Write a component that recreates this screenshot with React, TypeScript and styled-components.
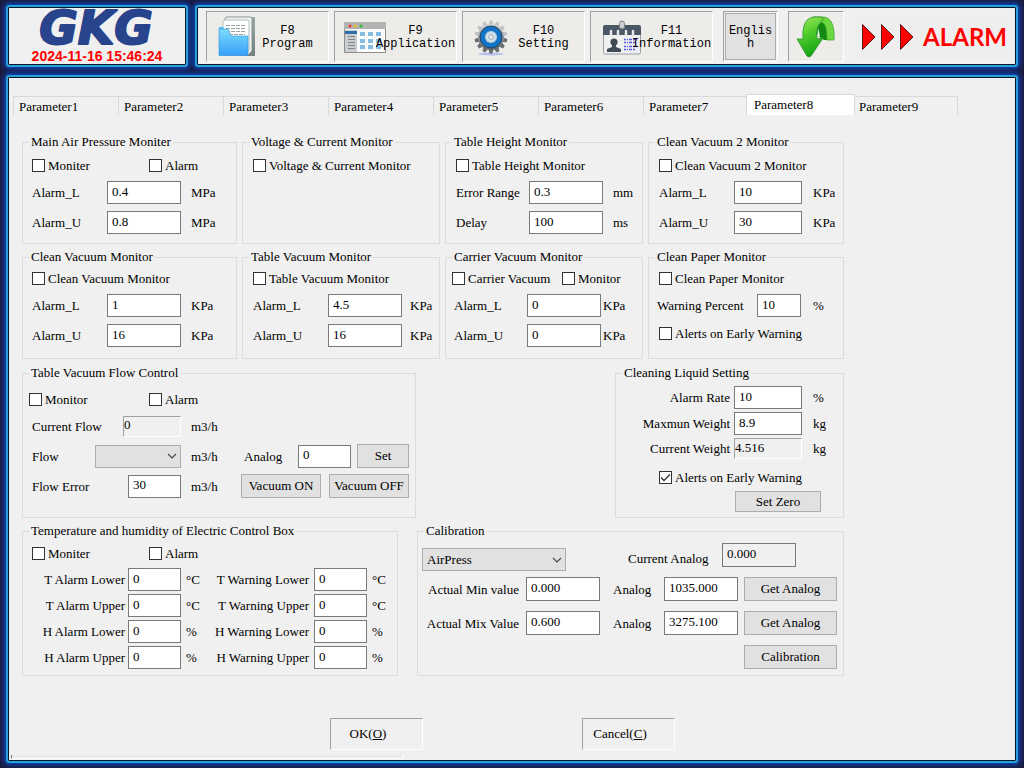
import React, { useId, useState } from "react";
import styled, { createGlobalStyle, css } from "styled-components";

const GlobalStyle = createGlobalStyle`
  *, *::before, *::after { box-sizing: border-box; }
  body {
    margin: 0;
    background: #1b1b42;
    color: #000;
    font: 13px/16px "Liberation Serif", "Times New Roman", serif;
  }
  button, input, select { font: inherit; color: inherit; margin: 0; border-radius: 0; }
`;

/* ---------- frame ---------- */

const Page = styled.div`
  min-height: 100vh;
  padding: 5px 6px;
  display: flex;
  flex-direction: column;
  gap: 8px;
  background: #1b1b42;
`;

const panel = css`
  border: 2px solid #2a9fd8;
  border-radius: 3px;
  background: #f0f0f0;
  box-shadow: inset 0 0 0 1px #06182c, 0 0 4px 2px #0a48b8;
`;

const Header = styled.header`
  display: grid;
  grid-template-columns: 182px 1fr;
  gap: 7px;
`;

const Brand = styled.div`
  ${panel}
  height: 62px;
  display: flex;
  flex-direction: column;
  align-items: center;
`;

const LogoArt = styled.svg`
  display: block;
  width: 176px;
  height: 41px;
  overflow: visible;
`;

const Clock = styled.time`
  font: bold 14px/16px "Liberation Sans", Arial, sans-serif;
  color: #f00;
`;

const Toolbar = styled.nav`
  ${panel}
  display: flex;
  align-items: center;
  gap: 10px;
  padding: 1px 8px 0 9px;
`;

const ToolGroup = styled.div`
  display: flex;
  gap: 5px;
`;

const sunken = css`
  border: 1px solid;
  border-color: #a0a0a0 #fff #fff #a0a0a0;
`;

const ToolButton = styled.button`
  ${sunken}
  width: 123px;
  height: 51px;
  padding: 0;
  display: grid;
  grid-template-columns: 40px 14px 1fr;
  align-items: center;
  background: #eeece9;
  font: 12px/13px "Liberation Mono", "Courier New", monospace;
`;

const ToolIcon = styled.svg`
  grid-area: 1 / 1 / 2 / 3;
  justify-self: end;
  width: 46px;
  height: 46px;
`;

const ToolText = styled.span`
  grid-area: 1 / 2 / 2 / 4;
  padding-top: 2px;
  text-align: center;
`;

const LanguageButton = styled.button`
  ${sunken}
  width: 55px;
  height: 51px;
  padding: 1px;
  background: #f0f0f0;
  font: 12px/13px "Liberation Mono", "Courier New", monospace;
`;

const LanguageFace = styled.span`
  height: 100%;
  padding: 4px 2px 2px;
  display: flex;
  align-items: center;
  justify-content: center;
  border: 1px solid #adadad;
  background: #e1e1e1;
  word-break: break-all;
`;

const ReturnButton = styled.button`
  ${sunken}
  width: 56px;
  height: 51px;
  padding: 0;
  display: grid;
  place-items: center;
  background: #eeece9;
`;

const Alarm = styled.div`
  margin-left: auto;
  height: 44px;
  padding: 0 1px 0 7px;
  display: flex;
  align-items: center;
  gap: 9px;
  background: #eee;
  color: #f00;
  font: bold 24px/30px Lato, "Noto Sans", sans-serif;
`;

/* ---------- tabs ---------- */

const Main = styled.main`
  ${panel}
  flex: 1;
  padding: 17px 1px 1px 1px;
  display: flex;
  flex-direction: column;
`;

const TabStrip = styled.div`
  padding-left: 4px;
  display: flex;
  align-items: flex-end;
  height: 21px;
`;

const Tab = styled.button<{ $on: boolean }>`
  flex: 0 1 105px;
  height: 19px;
  padding: 2px 0 0 5px;
  border: solid #d9d9d9;
  border-width: 1px 0 0 1px;
  background: #f0f0f0;
  text-align: left;
  &:last-child { border-right-width: 1px; }
  ${(p) =>
    p.$on &&
    css`
      flex-basis: 109px;
      height: 21px;
      margin: 0 -2px;
      padding: 0 0 0 7px;
      border-right-width: 1px;
      background: #fff;
      z-index: 1;
    `}
`;

const Sheet = styled.section`
  max-width: 848px;
  padding: 19px 13px 0 13px;
  display: grid;
  gap: 5px;
`;

const LowerSheet = styled.div`
  padding-top: 1px;
  display: grid;
  gap: 5px;
`;

const FourUp = styled.div`
  display: grid;
  grid-template-columns: 215fr 198fr 198fr 196fr;
  gap: 5px;
`;

const Split = styled.div<{ $cols: string }>`
  display: grid;
  grid-template-columns: ${(p) => p.$cols};
  justify-content: space-between;
`;

/* ---------- group boxes ---------- */

const Box = styled.fieldset<{ $top: number; $tall?: boolean }>`
  min-width: 0;
  min-height: ${(p) => (p.$tall ? 153 : 110)}px;
  margin: 0;
  padding: ${(p) => p.$top}px 0 4px;
  border: 1px solid #dcdcdc;
`;

const Legend = styled.legend`
  margin-left: 6px;
  padding: 0 2px;
  line-height: 16px;
  white-space: nowrap;
`;

const CheckRow = styled.div<{ $inset?: number; $first?: number; $above?: number; $below?: number }>`
  height: 17px;
  margin-top: ${(p) => p.$above ?? 0}px;
  margin-bottom: ${(p) => p.$below ?? 7}px;
  padding-left: ${(p) => p.$inset ?? 9}px;
  display: flex;
  align-items: center;
  > :first-child { min-width: ${(p) => p.$first ?? 0}px; }
`;

const CheckLabel = styled.label`
  display: flex;
  align-items: center;
  gap: 3px;
  white-space: nowrap;
`;

const CheckSlot = styled.span`
  display: grid;
  width: 13px;
  height: 13px;
  > * { grid-area: 1 / 1; }
`;

const CheckInput = styled.input`
  appearance: none;
  width: 13px;
  height: 13px;
  border: 1px solid #333;
  background: #fff;
  & + svg { visibility: hidden; pointer-events: none; }
  &:checked + svg { visibility: visible; }
`;

function Check({ text, on = false }: { text: string; on?: boolean }) {
  return (
    <CheckLabel>
      <CheckSlot>
        <CheckInput type="checkbox" defaultChecked={on} />
        <svg width="13" height="13" viewBox="0 0 13 13" fill="none" stroke="#333" strokeWidth="1.3">
          <path d="M2 6.5 L5 9.5 L11 3.5" />
        </svg>
      </CheckSlot>
      {text}
    </CheckLabel>
  );
}

const Fields = styled.div<{ $cols: string; $inset?: number; $gap?: number }>`
  padding-left: ${(p) => p.$inset ?? 9}px;
  display: grid;
  grid-template-columns: ${(p) => p.$cols};
  row-gap: ${(p) => p.$gap ?? 7}px;
  align-items: center;
`;

const Caption = styled.label<{ $right?: number; $left?: number }>`
  padding-top: 1px;
  padding-left: ${(p) => p.$left ?? 0}px;
  padding-right: ${(p) => p.$right ?? 0}px;
  text-align: ${(p) => (p.$right ? "right" : "left")};
  white-space: nowrap;
`;

const Unit = styled.span<{ $left: number; $width?: number }>`
  flex: none;
  width: ${(p) => (p.$width ? `${p.$width}px` : "auto")};
  padding-top: 1px;
  padding-left: ${(p) => p.$left}px;
  white-space: nowrap;
`;

const Entry = styled.input<{ $w?: number; $h?: number }>`
  width: ${(p) => (p.$w ? `${p.$w}px` : "100%")};
  min-width: 0;
  height: ${(p) => p.$h ?? 23}px;
  padding: 0 4px 2px;
  border: 1px solid #7a7a7a;
  background: ${(p) => (p.readOnly ? "#f0f0f0" : "#fff")};
`;

const Readout = styled.input<{ $w?: number }>`
  ${sunken}
  width: ${(p) => (p.$w ? `${p.$w}px` : "100%")};
  height: 21px;
  padding: 0 0 2px;
  align-self: end;
  background: #f0f0f0;
`;

type FieldProps = {
  text: string;
  value: string;
  unit?: string;
  unitGap?: number;
  left?: number;
  right?: number;
  height?: number;
  kind?: "entry" | "readout";
};

function Field({ text, value, unit, unitGap = 10, left, right, height, kind = "entry" }: FieldProps) {
  const id = useId();
  return (
    <>
      <Caption htmlFor={id} $left={left} $right={right}>{text}</Caption>
      {kind === "entry" ? (
        <Entry id={id} defaultValue={value} $h={height} />
      ) : (
        <Readout id={id} value={value} readOnly />
      )}
      {unit !== undefined && <Unit $left={unitGap}>{unit}</Unit>}
    </>
  );
}

const Push = styled.button<{ $w: number; $h?: number; $left?: number }>`
  flex: none;
  width: ${(p) => p.$w}px;
  height: ${(p) => p.$h ?? 24}px;
  margin-left: ${(p) => p.$left ?? 0}px;
  padding: 0;
  border: 1px solid #adadad;
  background: #e1e1e1;
  white-space: nowrap;
`;

const DropSlot = styled.span<{ $w: number }>`
  flex: none;
  width: ${(p) => p.$w}px;
  height: 23px;
  display: grid;
  align-items: center;
  > * { grid-area: 1 / 1; }
  > svg { justify-self: end; margin-right: 4px; pointer-events: none; }
`;

const DropInput = styled.select`
  appearance: none;
  width: 100%;
  height: 23px;
  padding: 0 18px 0 4px;
  border: 1px solid #adadad;
  background: #e1e1e1;
`;

function Drop({ id, label, width, options }: { id?: string; label?: string; width: number; options: string[] }) {
  return (
    <DropSlot $w={width}>
      <DropInput id={id} aria-label={label}>
        {options.map((o) => <option key={o}>{o}</option>)}
      </DropInput>
      <svg width="10" height="6" viewBox="0 0 10 6" fill="none" stroke="#444" strokeWidth="1.1">
        <path d="M1 1 L5 5 L9 1" />
      </svg>
    </DropSlot>
  );
}

const Line = styled.div`
  min-height: 24px;
  padding-left: 9px;
  display: flex;
  align-items: center;
`;

const Lines = styled.div`
  display: grid;
  gap: 6px;
`;

const Pair = styled.div<{ $w: number }>`
  flex: none;
  width: ${(p) => p.$w}px;
  display: flex;
  align-items: center;
  justify-content: space-between;
`;

const SelectLine = styled.div`
  height: 28px;
  margin-bottom: 6px;
  padding: 0 47px 0 4px;
  display: flex;
  align-items: flex-end;
  justify-content: space-between;
`;

const AnalogPair = styled.div`
  width: 168px;
  height: 28px;
  display: flex;
  align-items: flex-start;
  justify-content: space-between;
  > label { align-self: flex-end; padding-bottom: 4px; }
`;

const CalibrateCell = styled.div`
  grid-column: 5;
  display: flex;
`;

/* ---------- footer ---------- */

const Actions = styled.div`
  margin-top: 42px;
  padding-right: 20px;
  display: flex;
  justify-content: center;
  gap: 159px;
`;

const ActionButton = styled.button`
  ${sunken}
  width: 93px;
  height: 32px;
  padding: 0 16px 0 0;
  background: #f0f0f0;
`;

const StatusStrip = styled.div`
  width: 39%;
  height: 4px;
  margin: auto 0 1px 2px;
  border: solid #fff;
  border-width: 0 1px 1px 1px;
  border-left-color: #777;
  background: #e9e9e9;
`;

/* ---------- drawings ---------- */

function Logo() {
  return (
    <LogoArt viewBox="0 0 176 41" role="img" aria-label="GKG">
      <text
        x="87"
        y="37"
        textAnchor="middle"
        fontFamily="DejaVu Sans, Verdana, sans-serif"
        fontSize="47"
        fontWeight="bold"
        fontStyle="italic"
        fill="#27448c"
        stroke="#27448c"
        strokeWidth="2"
        strokeLinejoin="round"
      >
        GKG
      </text>
    </LogoArt>
  );
}

function ProgramIcon() {
  return (
    <ToolIcon viewBox="0 0 46 46">
      <defs>
        <linearGradient id="folder" x1="0" y1="0" x2="0" y2="1">
          <stop offset="0" stopColor="#7ddcfb" />
          <stop offset="1" stopColor="#35a0fa" />
        </linearGradient>
        <linearGradient id="sheetEdge" x1="0" y1="0" x2="1" y2="1">
          <stop offset="0" stopColor="#c9d4d2" />
          <stop offset="1" stopColor="#6d7f7d" />
        </linearGradient>
      </defs>
      <path d="M11 5 q0 -2 2 -2 h27 v39 h-12 v-37z" fill="url(#sheetEdge)" />
      <path d="M10 5 q0 -2 2 -2 h23 q2 0 2 2 v32 l-4 4 h-23z" fill="#f1f4f4" stroke="#74827f" strokeWidth="0.8" />
      <path d="M8 8 q0 -2 2 -2 h22 q2 0 2 2 v29 l-4 4 h-22z" fill="#fff" stroke="#a5afae" strokeWidth="0.8" />
      <path d="M11 11.500h19M11 14.500h19M11 17.500h19M14 20.500h16M18 23.500h12" stroke="#9aa3a1" strokeDasharray="4 1" />
      <path d="M4 13 h4 l3 5 h-7z" fill="#56c4f5" />
      <path d="M4 15 h9 l3 7 h17 v19.500 h-29z" fill="url(#folder)" stroke="#2c93dc" strokeWidth="0.6" />
    </ToolIcon>
  );
}

function ApplicationIcon() {
  const xs = [19, 27, 35];
  const ys = [18, 25, 31];
  return (
    <ToolIcon viewBox="0 0 46 46">
      <rect x="1.500" y="8.500" width="41" height="30" fill="#fbfbfb" stroke="#8d8d8d" />
      <rect x="1" y="8" width="42" height="7" fill="#b3b3b3" />
      <circle cx="7" cy="12" r="1.6" fill="#e8413a" />
      <circle cx="12.500" cy="12" r="1.6" fill="#e0c321" />
      <circle cx="18" cy="12" r="1.6" fill="#35b92e" />
      <rect x="2" y="16" width="12" height="22" fill="#c9cdd0" />
      <rect x="2" y="17" width="12" height="3" fill="#2e6ea8" />
      <path d="M5 22.500h7M5 25.500h7M5 28.500h7M5 31.500h7M5 34.500h7" stroke="#7e8488" />
      {ys.map((y) => xs.map((x) => <rect key={`${x}-${y}`} x={x - 2} y={y} width="5" height="4" fill="#85bce4" />))}
    </ToolIcon>
  );
}

function SettingIcon() {
  const teeth = Array.from({ length: 14 }, (_, i) => (i * 360) / 14);
  return (
    <ToolIcon viewBox="2 0 46 46">
      <defs>
        <linearGradient id="steel" x1="0" y1="0" x2="0" y2="1">
          <stop offset="0" stopColor="#d4d6d8" />
          <stop offset="1" stopColor="#5d6164" />
        </linearGradient>
        <radialGradient id="hub">
          <stop offset="0" stopColor="#fff" />
          <stop offset="1" stopColor="#b9cfe0" />
        </radialGradient>
      </defs>
      <ellipse cx="22" cy="40" rx="13" ry="1.500" fill="#b9bff0" />
      {teeth.map((a) => (
        <path
          key={a}
          d="M19.500 11 L20.500 6.500 h3 L24.500 11z"
          fill={a > 90 && a < 270 ? "#6a6e71" : "#c2c5c7"}
          transform={`rotate(${a} 22 23)`}
        />
      ))}
      <circle cx="22" cy="23" r="13" fill="url(#steel)" />
      <circle cx="22" cy="23" r="11" fill="#1374c6" stroke="#23445f" />
      <circle cx="22" cy="23" r="6" fill="url(#hub)" />
      <circle cx="22" cy="23" r="2.500" fill="#e3e8ee" stroke="#9db0bf" />
    </ToolIcon>
  );
}

function InformationIcon() {
  return (
    <ToolIcon viewBox="0 0 46 46">
      <rect x="4.500" y="12" width="37" height="28" rx="1.500" fill="#eff0f0" stroke="#9a9fa2" />
      <path d="M4 21 v-8 q0 -2 2 -2 h34 q2 0 2 2 v8z" fill="#4b5764" />
      <path d="M12 17v4M19 17v4M27 17v4M34 17v4" stroke="#e6e8ea" strokeWidth="2.500" strokeLinecap="round" />
      <rect x="20.500" y="7" width="5" height="8" rx="2.500" fill="#cfd2d4" stroke="#7e8488" />
      <circle cx="15" cy="28" r="3.600" fill="#3f4a54" />
      <path d="M13 30 h4 v3 l5 2 v3 h-14 v-3 l5 -2z" fill="#3f4a54" />
      <path d="M25 25.500h13M25 28.500h12M25 32.500h13M25 35.500h12" stroke="#5a5ae6" strokeWidth="1.600" strokeDasharray="2 1 1 1 3 1" />
    </ToolIcon>
  );
}

function ReturnIcon() {
  return (
    <svg width="40" height="42" viewBox="0 0 40 42">
      <defs>
        <linearGradient id="leaf" x1="0" y1="0" x2="0.300" y2="1">
          <stop offset="0" stopColor="#a4ec62" />
          <stop offset="0.500" stopColor="#4fcb2b" />
          <stop offset="1" stopColor="#17a512" />
        </linearGradient>
      </defs>
      <path d="M20 18 C21 8 25 5 29 5 C33 8 34 16 34 24 H28 C25 22 22 20 20 18z" fill="#128a12" />
      <path d="M17 1 H27 C36 1 39 12 38 24 H31 C31 14 30 7 25 6z" fill="#6dd741" stroke="#3fa52c" strokeWidth="0.800" />
      <path
        d="M7 23 C6 9 10 1 19 1 H25 C31 3 22 6 21 14 Q20 18 21 23 L27 22 L15 40 Q13 42 11 40 L1 23z"
        fill="url(#leaf)"
        stroke="#26922a"
        strokeWidth="0.800"
      />
      <path d="M22 12 L24 20 H21.500z" fill="#f4f4f2" />
    </svg>
  );
}

function AlarmArrows() {
  return (
    <svg width="52" height="26" viewBox="0 0 52 26" aria-hidden="true">
      {[0, 19, 38].map((x) => (
        <path key={x} d={`M${x + 0.5} 0.500 L${x + 13} 13 L${x + 0.5} 25.500z`} fill="#f00" stroke="#300" strokeWidth="0.800" />
      ))}
    </svg>
  );
}

const tools = [
  { keyName: "F8", name: "Program", Icon: ProgramIcon },
  { keyName: "F9", name: "Application", Icon: ApplicationIcon },
  { keyName: "F10", name: "Setting", Icon: SettingIcon },
  { keyName: "F11", name: "Information", Icon: InformationIcon },
];

const tabNames = Array.from({ length: 9 }, (_, i) => `Parameter${i + 1}`);

/* ---------- groups ---------- */

function FlowControl() {
  const id = useId();
  return (
    <Box $top={10} $tall>
      <Legend>Table Vacuum Flow Control</Legend>
      <CheckRow $inset={6} $first={120} $below={6}>
        <Check text="Monitor" />
        <Check text="Alarm" />
      </CheckRow>
      <Lines>
        <Line>
          <Pair $w={149}>
            <Caption htmlFor={`${id}c`}>Current Flow</Caption>
            <Readout id={`${id}c`} $w={58} value="0" readOnly />
          </Pair>
          <Unit $left={10}>m3/h</Unit>
        </Line>
        <Line>
          <Pair $w={149}>
            <Caption htmlFor={`${id}f`}>Flow</Caption>
            <Drop id={`${id}f`} width={86} options={[""]} />
          </Pair>
          <Unit $left={10} $width={63}>m3/h</Unit>
          <Pair $w={107}>
            <Caption htmlFor={`${id}a`}>Analog</Caption>
            <Entry id={`${id}a`} $w={53} defaultValue="0" />
          </Pair>
          <Push $w={52} $left={6}>Set</Push>
        </Line>
        <Line>
          <Pair $w={149}>
            <Caption htmlFor={`${id}e`}>Flow Error</Caption>
            <Entry id={`${id}e`} $w={53} defaultValue="30" />
          </Pair>
          <Unit $left={10} $width={60}>m3/h</Unit>
          <Push $w={80}>Vacuum ON</Push>
          <Push $w={80} $left={8}>Vacuum OFF</Push>
        </Line>
      </Lines>
    </Box>
  );
}

function LiquidSetting() {
  return (
    <Box $top={5} $tall>
      <Legend>Cleaning Liquid Setting</Legend>
      <Fields $cols="118px 68px 1fr" $inset={0} $gap={3}>
        <Field text="Alarm Rate" value="10" unit="%" unitGap={11} right={4} />
        <Field text="Maxmun Weight" value="8.9" unit="kg" unitGap={11} right={4} />
        <Field text="Current Weight" value="4.516" unit="kg" unitGap={11} right={4} kind="readout" />
      </Fields>
      <CheckRow $inset={43} $above={10} $below={5}>
        <Check text="Alerts on Early Warning" on />
      </CheckRow>
      <Push $w={86} $h={21} $left={119}>Set Zero</Push>
    </Box>
  );
}

function ControlBox() {
  const rows = [
    ["T", "Lower", "°C"],
    ["T", "Upper", "°C"],
    ["H", "Lower", "%"],
    ["H", "Upper", "%"],
  ];
  return (
    <Box $top={6} $tall>
      <Legend>Temperature and humidity of Electric Control Box</Legend>
      <CheckRow $first={117} $below={6}>
        <Check text="Moniter" />
        <Check text="Alarm" />
      </CheckRow>
      <Fields $cols="105px 53px 28px 105px 53px 1fr" $inset={0} $gap={3}>
        {rows.map(([kind, side, unit]) => (
          <React.Fragment key={kind + side}>
            <Field text={`${kind} Alarm ${side}`} value="0" unit={unit} unitGap={5} right={3} />
            <Field text={`${kind} Warning ${side}`} value="0" unit={unit} unitGap={5} right={5} />
          </React.Fragment>
        ))}
      </Fields>
    </Box>
  );
}

function Calibration() {
  const id = useId();
  return (
    <Box $top={4} $tall>
      <Legend>Calibration</Legend>
      <SelectLine>
        <Drop label="Calibration source" width={144} options={["AirPress"]} />
        <AnalogPair>
          <Caption htmlFor={id}>Current Analog</Caption>
          <Entry id={id} $w={74} $h={24} value="0.000" readOnly />
        </AnalogPair>
      </SelectLine>
      <Fields $cols="108px 74px 64px 74px 1fr" $inset={0} $gap={10}>
        <Field text="Actual Min value" value="0.000" right={7} height={24} />
        <Field text="Analog" value="1035.000" left={13} height={24} />
        <Push $w={93} $left={6}>Get Analog</Push>
        <Field text="Actual Mix Value" value="0.600" right={7} height={24} />
        <Field text="Analog" value="3275.100" left={13} height={24} />
        <Push $w={93} $left={6}>Get Analog</Push>
        <CalibrateCell>
          <Push $w={93} $left={6}>Calibration</Push>
        </CalibrateCell>
      </Fields>
    </Box>
  );
}

export default function App() {
  const [active, setActive] = useState("Parameter8");
  return (
    <>
      <GlobalStyle />
      <Page>
        <Header>
          <Brand>
            <Logo />
            <Clock>2024-11-16 15:46:24</Clock>
          </Brand>
          <Toolbar>
            <ToolGroup>
              {tools.map(({ keyName, name, Icon }) => (
                <ToolButton key={keyName}>
                  <Icon />
                  <ToolText>{keyName}<br />{name}</ToolText>
                </ToolButton>
              ))}
            </ToolGroup>
            <LanguageButton><LanguageFace>English</LanguageFace></LanguageButton>
            <ReturnButton aria-label="Return"><ReturnIcon /></ReturnButton>
            <Alarm><AlarmArrows />ALARM</Alarm>
          </Toolbar>
        </Header>
        <Main>
          <TabStrip role="tablist">
            {tabNames.map((name) => (
              <Tab key={name} role="tab" aria-selected={name === active} $on={name === active} onClick={() => setActive(name)}>
                {name}
              </Tab>
            ))}
          </TabStrip>
          <Sheet>
            <FourUp>
              <Box $top={7}>
                <Legend>Main Air Pressure Moniter</Legend>
                <CheckRow $first={117}>
                  <Check text="Moniter" />
                  <Check text="Alarm" />
                </CheckRow>
                <Fields $cols="75px 74px 1fr">
                  <Field text="Alarm_L" value="0.4" unit="MPa" />
                  <Field text="Alarm_U" value="0.8" unit="MPa" />
                </Fields>
              </Box>
              <Box $top={7}>
                <Legend>Voltage &amp; Current Monitor</Legend>
                <CheckRow $inset={10}>
                  <Check text="Voltage & Current Monitor" />
                </CheckRow>
              </Box>
              <Box $top={7}>
                <Legend>Table Height Monitor</Legend>
                <CheckRow $inset={10}>
                  <Check text="Table Height Monitor" />
                </CheckRow>
                <Fields $cols="73px 74px 1fr" $inset={10}>
                  <Field text="Error Range" value="0.3" unit="mm" />
                  <Field text="Delay" value="100" unit="ms" />
                </Fields>
              </Box>
              <Box $top={7}>
                <Legend>Clean Vacuum 2 Monitor</Legend>
                <CheckRow $inset={10}>
                  <Check text="Clean Vacuum 2 Monitor" />
                </CheckRow>
                <Fields $cols="75px 68px 1fr" $inset={10}>
                  <Field text="Alarm_L" value="10" unit="KPa" unitGap={11} />
                  <Field text="Alarm_U" value="30" unit="KPa" unitGap={11} />
                </Fields>
              </Box>
            </FourUp>
            <FourUp>
              <Box $top={5}>
                <Legend>Clean Vacuum Monitor</Legend>
                <CheckRow>
                  <Check text="Clean Vacuum Monitor" />
                </CheckRow>
                <Fields $cols="75px 74px 1fr">
                  <Field text="Alarm_L" value="1" unit="KPa" />
                  <Field text="Alarm_U" value="16" unit="KPa" />
                </Fields>
              </Box>
              <Box $top={5}>
                <Legend>Table Vacuum Monitor</Legend>
                <CheckRow $inset={10}>
                  <Check text="Table Vacuum Monitor" />
                </CheckRow>
                <Fields $cols="75px 74px 1fr" $inset={10}>
                  <Field text="Alarm_L" value="4.5" unit="KPa" unitGap={8} />
                  <Field text="Alarm_U" value="16" unit="KPa" unitGap={8} />
                </Fields>
              </Box>
              <Box $top={5}>
                <Legend>Carrier Vacuum Monitor</Legend>
                <CheckRow $inset={6} $first={110}>
                  <Check text="Carrier Vacuum" />
                  <Check text="Monitor" />
                </CheckRow>
                <Fields $cols="73px 74px 1fr" $inset={8}>
                  <Field text="Alarm_L" value="0" unit="KPa" unitGap={2} />
                  <Field text="Alarm_U" value="0" unit="KPa" unitGap={2} />
                </Fields>
              </Box>
              <Box $top={5}>
                <Legend>Clean Paper Monitor</Legend>
                <CheckRow $inset={10}>
                  <Check text="Clean Paper Monitor" />
                </CheckRow>
                <Fields $cols="100px 44px 1fr" $inset={8}>
                  <Field text="Warning Percent" value="10" unit="%" unitGap={12} />
                </Fields>
                <CheckRow $inset={10} $above={8} $below={0}>
                  <Check text="Alerts on Early Warning" />
                </CheckRow>
              </Box>
            </FourUp>
            <LowerSheet>
              <Split $cols="394px 229px">
                <FlowControl />
                <LiquidSetting />
              </Split>
              <Split $cols="376px 427px">
                <ControlBox />
                <Calibration />
              </Split>
            </LowerSheet>
          </Sheet>
          <Actions>
            <ActionButton>OK(<u>O</u>)</ActionButton>
            <ActionButton>Cancel(<u>C</u>)</ActionButton>
          </Actions>
          <StatusStrip />
        </Main>
      </Page>
    </>
  );
}
